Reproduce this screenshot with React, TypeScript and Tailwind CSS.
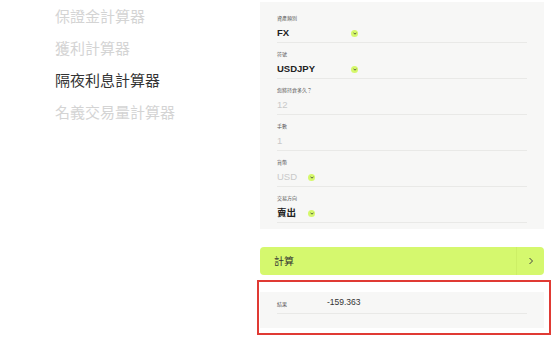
const nav = [
  { label: "保證金計算器", active: false },
  { label: "獲利計算器", active: false },
  { label: "隔夜利息計算器", active: true },
  { label: "名義交易量計算器", active: false },
];

type Field = {
  label: string;
  value: string;
  muted?: boolean;
  select?: "wide" | "narrow";
};

const fields: Field[] = [
  { label: "資產類別", value: "FX", select: "wide" },
  { label: "符號", value: "USDJPY", select: "wide" },
  { label: "您將持倉多久？", value: "12", muted: true },
  { label: "手數", value: "1", muted: true },
  { label: "貨幣", value: "USD", muted: true, select: "narrow" },
  { label: "交易方向", value: "賣出", select: "narrow" },
];

function Caret() {
  return (
    <span className="flex h-[7px] w-[7px] shrink-0 items-center justify-center rounded-full bg-[#d5f86b]">
      <svg width="4" height="3" viewBox="0 0 4 3" fill="none">
        <path d="M0.5 0.7 2 2.2 3.5 0.7" stroke="#3a3a3a" strokeWidth="0.8" />
      </svg>
    </span>
  );
}

function Row({ f }: { f: Field }) {
  const valueClass = f.muted
    ? "text-[9.5px] font-normal text-[#c9c9c9]"
    : "text-[9.5px] font-semibold text-[#222]";
  return (
    <div className="flex h-[36px] flex-col border-b border-[#e9e9e7] pt-[8px]">
      <span className="text-[5px] leading-[6px] text-[#555]">{f.label}</span>
      <div
        className={
          f.select === "wide"
            ? "mt-[4px] flex h-[16px] w-[81px] items-center justify-between"
            : f.select === "narrow"
              ? "mt-[4px] flex h-[16px] w-[38px] items-center justify-between"
              : "mt-[4px] flex h-[16px] items-center"
        }
      >
        <span className={valueClass}>{f.value}</span>
        {f.select && <Caret />}
      </div>
    </div>
  );
}

export default function App() {
  return (
    <div
      className="flex h-[340px] w-[558px] overflow-hidden bg-white"
      style={{ fontFamily: '"Liberation Sans", "Noto Sans CJK TC", sans-serif' }}
    >
      {/* Menú lateral */}
      <div className="flex w-[260px] shrink-0 flex-col pl-[55px] pt-[1px]">
        {nav.map((n) => (
          <span
            key={n.label}
            className={
              n.active
                ? "text-[15px] leading-[32px] text-[#333]"
                : "text-[15px] leading-[32px] text-[#d4d4d4]"
            }
          >
            {n.label}
          </span>
        ))}
      </div>

      {/* Calculadora */}
      <div className="flex w-[284px] shrink-0 flex-col">
        <div className="mt-[2px] flex flex-col bg-[#f7f7f6] px-[17px] pb-[6px] pt-[5px]">
          {fields.map((f) => (
            <Row key={f.label} f={f} />
          ))}
        </div>

        <button
          type="button"
          className="mt-[18px] flex h-[28px] items-stretch rounded-[4px] bg-[#d5f86e] text-left"
        >
          <span className="flex flex-1 items-center pl-[14px] text-[10px] text-[#333]">
            計算
          </span>
          <span className="flex w-[28px] items-center justify-center border-l border-[#cdef66]">
            <svg width="6" height="8" viewBox="0 0 6 8" fill="none">
              <path d="M1.5 1 4.5 4 1.5 7" stroke="#444" strokeWidth="1" />
            </svg>
          </span>
        </button>

        <div className="relative mt-[17px]">
          <div className="flex flex-col bg-[#f7f7f6] px-[17px] pb-[14px] pt-[2px]">
            <div className="flex h-[20px] items-center border-b border-[#e9e9e7]">
              <span className="mt-[3px] w-[50px] text-[5px] text-[#555]">結果</span>
              <span className="-mt-[3px] text-[8.5px] text-[#333]">-159.363</span>
            </div>
          </div>
          <div className="pointer-events-none absolute -left-[3px] -right-[7px] -top-[12px] -bottom-[7px] border-2 border-[#e03a34]" />
        </div>
      </div>
    </div>
  );
}
